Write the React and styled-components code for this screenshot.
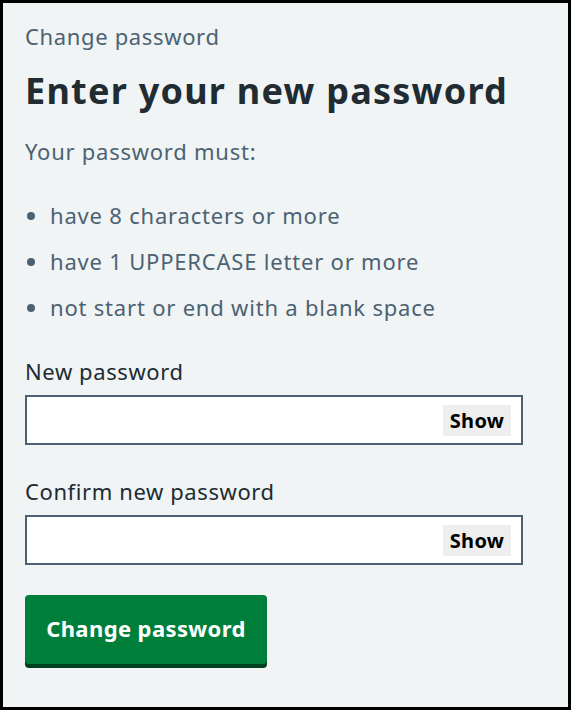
import React from "react";
import styled, { createGlobalStyle } from "styled-components";

const GlobalStyle = createGlobalStyle`
  html, body {
    margin: 0;
    padding: 0;
    background: #ffffff;
  }
  * {
    box-sizing: border-box;
  }
`;

function App() {
  return (
    <>
      <GlobalStyle />
      <Frame>
        <Caption>Change password</Caption>
        <Heading>Enter your new password</Heading>
        <Lead>Your password must:</Lead>
        <Rules>
          <Rule>have 8 characters or more</Rule>
          <Rule>have 1 UPPERCASE letter or more</Rule>
          <Rule>not start or end with a blank space</Rule>
        </Rules>
        <Field>
          <Label htmlFor="new-password">New password</Label>
          <InputWrap>
            <Input id="new-password" type="password" />
            <ShowButton type="button">Show</ShowButton>
          </InputWrap>
        </Field>
        <Field>
          <Label htmlFor="confirm-password">Confirm new password</Label>
          <InputWrap>
            <Input id="confirm-password" type="password" />
            <ShowButton type="button">Show</ShowButton>
          </InputWrap>
        </Field>
        <SubmitButton type="submit">Change password</SubmitButton>
      </Frame>
    </>
  );
}

const Frame = styled.div`
  width: 571px;
  height: 710px;
  border: 3px solid #000000;
  background: #f0f4f5;
  padding: 19px 22px 0 22px;
  font-family: "Noto Sans", "Open Sans", sans-serif;
  color: #212b32;
  display: flex;
  flex-direction: column;
  align-items: flex-start;
`;

const Caption = styled.div`
  font-size: 22px;
  line-height: 28px;
  letter-spacing: 0.65px;
  color: #4c6272;
`;

const Heading = styled.h1`
  margin: 19px 0 0 0;
  font-size: 36px;
  line-height: 44px;
  font-weight: 700;
  letter-spacing: 1.25px;
  color: #212b32;
`;

const Lead = styled.p`
  margin: 22px 0 0 0;
  font-size: 22px;
  line-height: 32px;
  letter-spacing: 0.75px;
  color: #4c6272;
`;

const Rules = styled.ul`
  margin: 32px 0 0 0;
  padding: 0 0 0 25px;
  color: #4c6272;
`;

const Rule = styled.li`
  font-size: 22px;
  line-height: 32px;
  letter-spacing: 0.8px;
  margin-bottom: 14px;

  &:last-child {
    margin-bottom: 0;
  }
`;

const Field = styled.div`
  margin-top: 32px;
  width: 498px;
  display: flex;
  flex-direction: column;

  & + & {
    margin-top: 30px;
  }
`;

const Label = styled.label`
  font-size: 22px;
  line-height: 32px;
  letter-spacing: 0.6px;
  color: #212b32;
  margin-bottom: 8px;
`;

const InputWrap = styled.div`
  height: 50px;
  border: 2px solid #4c6272;
  background: #ffffff;
  display: flex;
  align-items: center;
  padding: 0 10px 0 8px;
`;

const Input = styled.input`
  flex: 1;
  min-width: 0;
  border: none;
  outline: none;
  background: transparent;
  font-family: inherit;
  font-size: 22px;
`;

const ShowButton = styled.button`
  width: 68px;
  height: 31px;
  border: none;
  background: #eeeeee;
  font-family: inherit;
  font-size: 20px;
  font-weight: 700;
  letter-spacing: 0.3px;
  color: #000000;
  padding: 0;
`;

const SubmitButton = styled.button`
  margin-top: 30px;
  width: 242px;
  height: 69px;
  border: none;
  border-radius: 4px;
  background: #007f3b;
  box-shadow: 0 4px 0 #00401e;
  color: #ffffff;
  font-family: inherit;
  font-size: 22px;
  font-weight: 700;
  letter-spacing: 0.4px;
  padding: 0 0 3px 0;
`;

export default App;
